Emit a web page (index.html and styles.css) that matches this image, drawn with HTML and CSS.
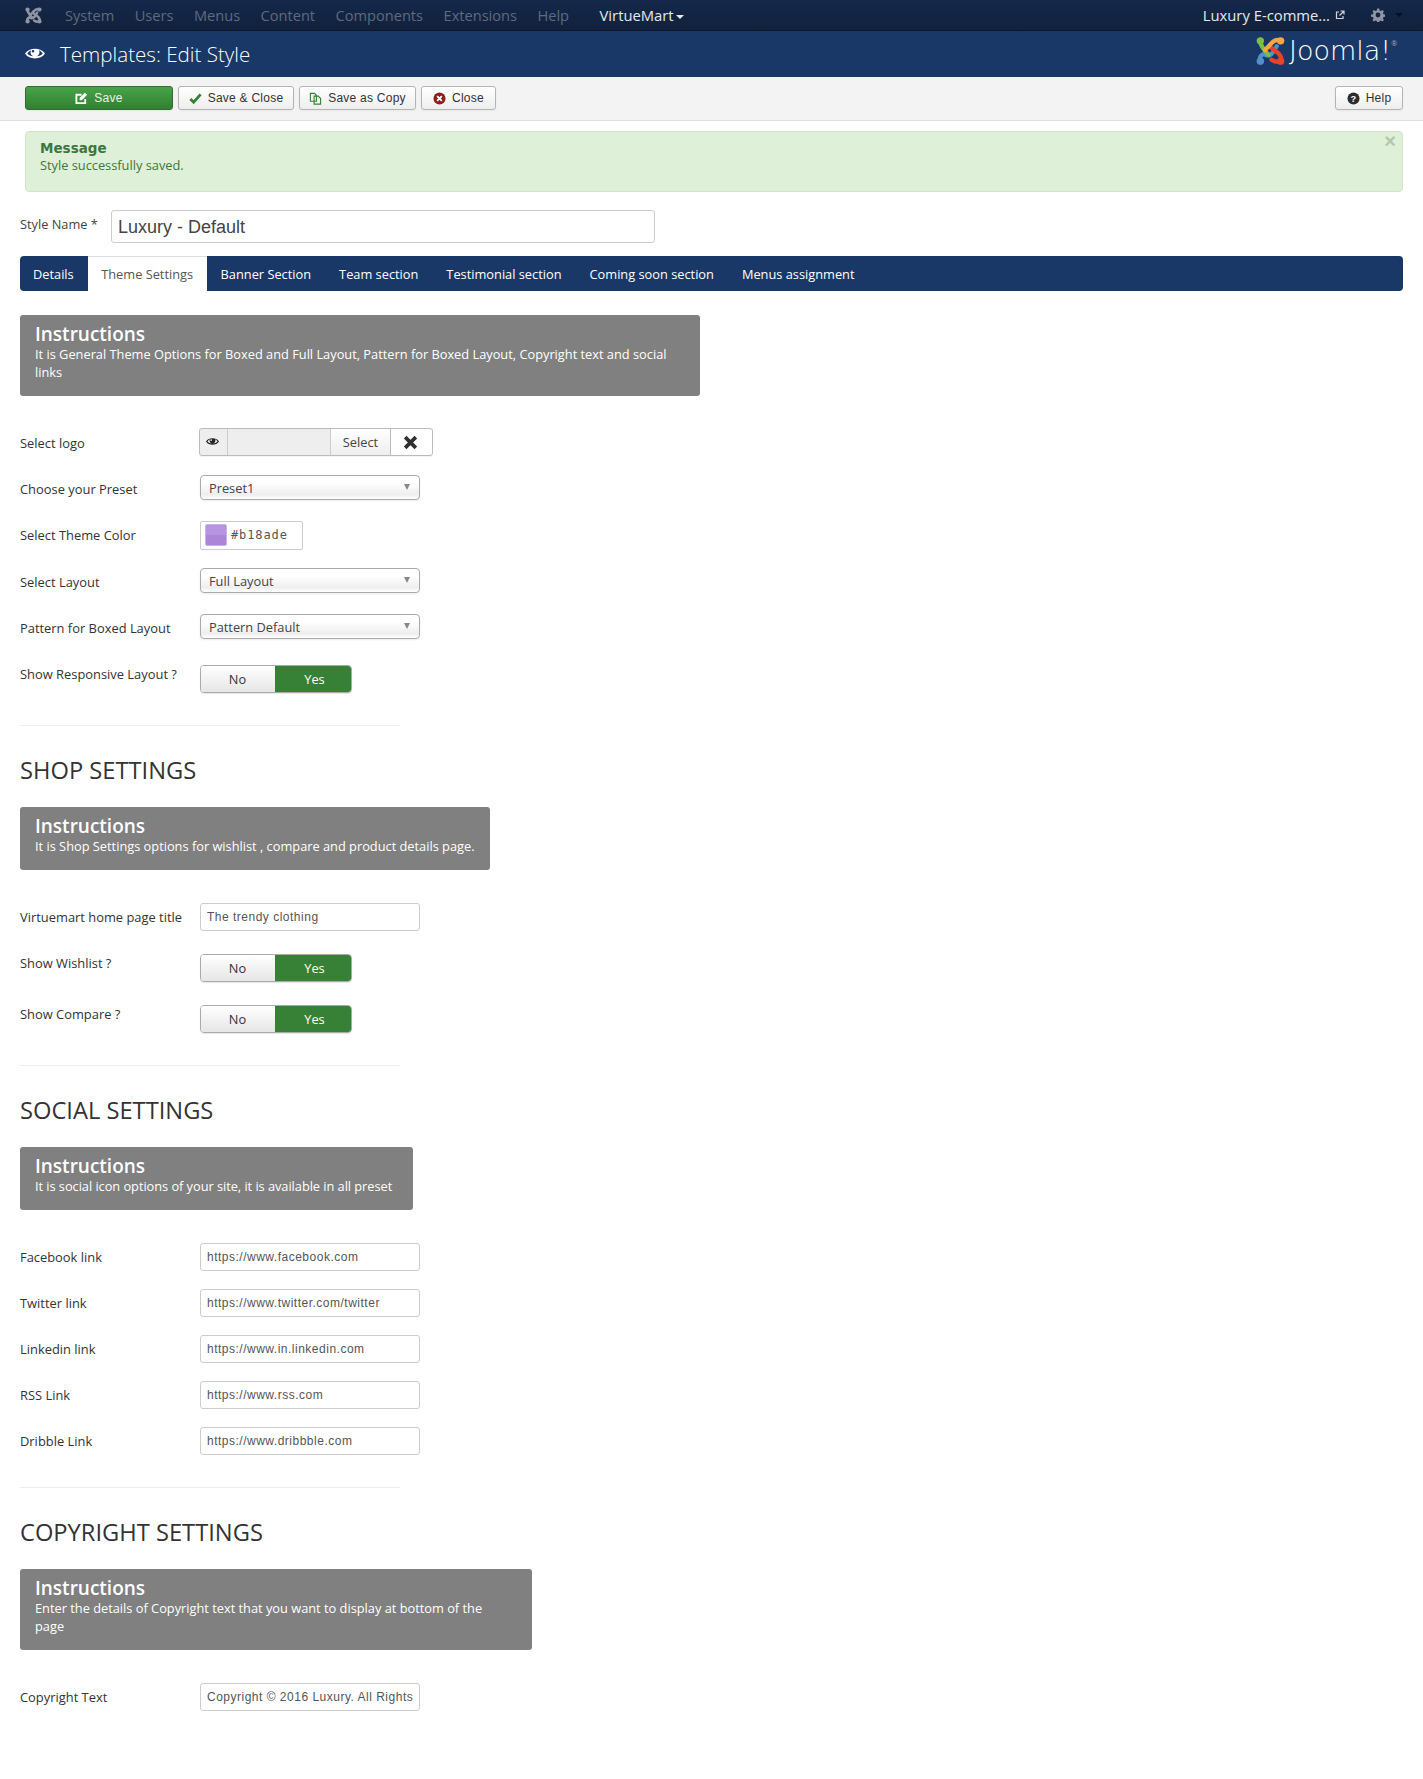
FILE: index.html
```html
<!DOCTYPE html>
<html lang="en">
<head>
<meta charset="utf-8">
<title>Templates: Edit Style</title>
<link rel="stylesheet" href="styles.css">
</head>
<body>
<svg class="defs" width="0" height="0" aria-hidden="true">
  <symbol id="mark" viewBox="0 0 30 30">
    <g fill="none" stroke-width="4.4" stroke-linecap="round" stroke-linejoin="round">
      <path class="m-b" d="M4 26 Q3 20 8 18 Q13 22 17 17 L21.500 10"/>
      <path class="m-g" d="M4 4 Q5 11 13 19"/>
      <path class="m-r" d="M15 11 L23 17 Q27 21 26 26 Q20 27 16 24"/>
      <path class="m-o" d="M26 4 Q20 2 16 7 L9.500 14"/>
    </g>
    <circle class="d-g" cx="4.500" cy="4.500" r="3.800"/>
    <circle class="d-o" cx="25.500" cy="4.500" r="3.800"/>
    <circle class="d-r" cx="25.500" cy="25.500" r="3.800"/>
    <circle class="d-b" cx="4.500" cy="25.500" r="3.800"/>
  </symbol>
  <symbol id="eye" viewBox="0 0 20 13">
    <path d="M0 6.500 C4 0 16 0 20 6.500 C16 13 4 13 0 6.500 Z M2.200 6.500 C5 10.500 15 10.500 17.800 6.500 C16.600 4.800 15.300 3.800 14 3.200 C15.500 6.500 13 9.600 10 9.600 C7 9.600 4.500 6.500 6 3.200 C4.700 3.800 3.400 4.800 2.200 6.500 Z M8 3 A1.300 1.300 0 1 0 8 5.600 A1.300 1.300 0 1 0 8 3 Z" fill-rule="evenodd"/>
  </symbol>
</svg>

<nav class="topnav">
  <svg class="nav-mark"><use href="#mark"/></svg>
  <ul class="nav-menu">
    <li>System</li><li>Users</li><li>Menus</li><li>Content</li><li>Components</li><li>Extensions</li><li>Help</li>
    <li class="active">VirtueMart<i class="caret"></i></li>
  </ul>
  <div class="nav-right">
    <span class="site-name">Luxury E-comme...</span>
    <svg class="ext" viewBox="0 0 10 10"><path d="M4 2H1.500V8.500H8V6M5.500 1H9V4.500M9 1L4.500 5.500" fill="none" stroke="#cfd3da" stroke-width="1.200"/></svg>
    <svg class="gear" viewBox="0 0 14 14"><path d="M7 0.500l1.200 0 .4 1.900 1.300.6 1.600-1 1.400 1.400-1 1.600.6 1.300 1.900.4 0 2-1.900.4-.6 1.300 1 1.600-1.400 1.400-1.600-1-1.300.6-.4 1.900-2 0-.4-1.900-1.300-.6-1.600 1-1.400-1.400 1-1.600-.6-1.300-1.900-.4 0-2 1.900-.4.6-1.300-1-1.600 1.400-1.400 1.600 1 1.300-.6.4-1.900z M7 4.600a2.400 2.400 0 1 0 0 4.800 2.400 2.400 0 1 0 0-4.800z" fill="#8d95a3" fill-rule="evenodd"/></svg>
    <i class="caret dark"></i>
  </div>
</nav>

<header class="titlebar">
  <svg class="title-eye"><use href="#eye"/></svg>
  <h1>Templates: Edit Style</h1>
  <div class="brand">
    <svg class="brand-mark"><use href="#mark"/></svg>
    <span class="brand-text">Joomla!</span><sup class="brand-reg">®</sup>
  </div>
</header>

<div class="toolbar">
  <button class="tb tb-save"><svg class="tb-i" viewBox="0 0 14 14"><path d="M11 7.500V12H1.500V3H7" fill="none" stroke="#fff" stroke-width="2"/><path d="M5 6.500L10.500.8 13 3 7.500 9H5z" fill="#fff"/></svg>Save</button>
  <button class="tb tb-sc"><svg class="tb-i" viewBox="0 0 14 14"><path d="M1.500 7.500L5 11 12.500 2.500" fill="none" stroke="#378137" stroke-width="3"/></svg>Save &amp; Close</button>
  <button class="tb tb-copy"><svg class="tb-i" viewBox="0 0 14 14"><path d="M1.500 1.500H6L8 3.500V10H1.500z M5.500 4.500H10L12.500 7V13H5.500z" fill="#f3f3f3" stroke="#378137" stroke-width="1.200"/></svg>Save as Copy</button>
  <button class="tb tb-close"><svg class="tb-i" viewBox="0 0 14 14"><circle cx="7" cy="7" r="6.500" fill="#8f1d1d"/><path d="M4.500 4.500L9.500 9.500M9.500 4.500L4.500 9.500" stroke="#fff" stroke-width="2"/></svg>Close</button>
  <button class="tb tb-help"><svg class="tb-i" viewBox="0 0 14 14"><circle cx="7" cy="7" r="6.500" fill="#2d2d2d"/><text class="q" x="7" y="10.500" text-anchor="middle">?</text></svg>Help</button>
</div>

<main class="content">
  <div class="alert">
    <span class="alert-x">×</span>
    <h4>Message</h4>
    <p>Style successfully saved.</p>
  </div>

  <div class="style-name">
    <label>Style Name *</label>
    <input class="name-input" type="text" value="Luxury - Default">
  </div>

  <ul class="tabs">
    <li>Details</li><li class="on">Theme Settings</li><li>Banner Section</li><li>Team section</li><li>Testimonial section</li><li>Coming soon section</li><li>Menus assignment</li>
  </ul>

  <section class="note w1">
    <h3>Instructions</h3>
    <p>It is General Theme Options for Boxed and Full Layout, Pattern for Boxed Layout, Copyright text and social links</p>
  </section>

  <div class="row">
    <label>Select logo</label>
    <div class="media">
      <span class="m-eye"><svg><use href="#eye"/></svg></span>
      <span class="m-field"></span>
      <span class="m-sel">Select</span>
      <span class="m-x"><svg viewBox="0 0 14 14"><path d="M2 2L12 12M12 2L2 12" stroke="#2f2f2f" stroke-width="3.400" fill="none"/></svg></span>
    </div>
  </div>
  <div class="row"><label>Choose your Preset</label><div class="sel">Preset1</div></div>
  <div class="row tall"><label>Select Theme Color</label><div class="color"><span class="sw"></span><span>#b18ade</span></div></div>
  <div class="row"><label>Select Layout</label><div class="sel">Full Layout</div></div>
  <div class="row"><label>Pattern for Boxed Layout</label><div class="sel">Pattern Default</div></div>
  <div class="row top lead"><label>Show Responsive Layout ?</label><div class="tog"><span class="no">No</span><span class="yes">Yes</span></div></div>

  <hr>
  <h2>SHOP SETTINGS</h2>
  <section class="note w2">
    <h3>Instructions</h3>
    <p>It is Shop Settings options for wishlist , compare and product details page.</p>
  </section>
  <div class="row"><label>Virtuemart home page title</label><input class="txt" type="text" value="The trendy clothing"></div>
  <div class="row top lead"><label>Show Wishlist ?</label><div class="tog"><span class="no">No</span><span class="yes">Yes</span></div></div>
  <div class="row top"><label>Show Compare ?</label><div class="tog"><span class="no">No</span><span class="yes">Yes</span></div></div>

  <hr>
  <h2>SOCIAL SETTINGS</h2>
  <section class="note w3">
    <h3>Instructions</h3>
    <p>It is social icon options of your site, it is available in all preset</p>
  </section>
  <div class="row"><label>Facebook link</label><input class="txt" type="text" value="https://www.facebook.com"></div>
  <div class="row"><label>Twitter link</label><input class="txt" type="text" value="https://www.twitter.com/twitter"></div>
  <div class="row"><label>Linkedin link</label><input class="txt" type="text" value="https://www.in.linkedin.com"></div>
  <div class="row"><label>RSS Link</label><input class="txt" type="text" value="https://www.rss.com"></div>
  <div class="row"><label>Dribble Link</label><input class="txt" type="text" value="https://www.dribbble.com"></div>

  <hr>
  <h2>COPYRIGHT SETTINGS</h2>
  <section class="note w4">
    <h3>Instructions</h3>
    <p>Enter the details of Copyright text that you want to display at bottom of the page</p>
  </section>
  <div class="row"><label>Copyright Text</label><input class="txt" type="text" value="Copyright © 2016 Luxury. All Rights Reserved"></div>
</main>
</body>
</html>
```

FILE: styles.css
```css
* { box-sizing: border-box; }
html, body { margin: 0; padding: 0; }
body { background: #fff; color: #333; font-family: "Open Sans", sans-serif; font-size: 12.8px; height: 1779px; overflow: hidden; }
.defs { position: absolute; }
h1, h2, h3, h4, p, ul { margin: 0; padding: 0; }
ul { list-style: none; }

.m-g { stroke: var(--g); }
.m-o { stroke: var(--o); }
.m-r { stroke: var(--r); }
.m-b { stroke: var(--b); }
.d-g { fill: var(--g); }
.d-o { fill: var(--o); }
.d-r { fill: var(--r); }
.d-b { fill: var(--b); }

.topnav { height: 31px; background: linear-gradient(#14284a, #12213c); border-bottom: 1px solid #0c1729; display: flex; align-items: center; padding-left: 25px; }
.nav-mark { width: 17px; height: 17px; margin-right: 23px; --g: #8d95a3; --o: #8d95a3; --r: #8d95a3; --b: #8d95a3; }
.nav-menu { display: flex; font-size: 14.6px; color: #5f6a7e; }
.nav-menu li { margin-right: 20.500px; line-height: 30px; }
.nav-menu li.active { color: #e6e8ec; margin-left: 10px; font-size: 14.800px; }
.caret { display: inline-block; border: 4px solid transparent; border-top-color: #e6e8ec; border-bottom: 0; margin-left: 2px; vertical-align: middle; }
.caret.dark { border-top-color: #07101f; margin-left: 10px; }
.nav-right { margin-left: auto; display: flex; align-items: center; padding-right: 20px; color: #e6e8ec; font-size: 14.800px; }
.ext { width: 10px; height: 10px; margin-left: 5px; margin-right: 26px; }
.gear { width: 14px; height: 14px; }

.titlebar { height: 46px; background: #1a3867; display: flex; align-items: center; padding-left: 25px; color: #fff; }
.title-eye { width: 20px; height: 13px; fill: #fff; margin: -2px 15px 0 0; }
h1 { font-size: 20.600px; font-weight: 300; line-height: 46px; height: 46px; }
.brand { margin-left: auto; display: flex; align-items: center; padding-right: 26px; height: 46px; margin-top: -7px; --g: #7ac143; --o: #f9a541; --r: #e8432a; --b: #5091cd; }
.brand-mark { width: 29px; height: 30px; margin-right: 4px; }
.brand-text { font-family: "DejaVu Sans", sans-serif; font-weight: 200; font-size: 27px; line-height: 30px; }
.brand-reg { font-size: 7px; color: #aab; margin-top: -14px; }

.toolbar { height: 44px; background: #f3f3f3; border-bottom: 1px solid #e0e0e0; display: flex; padding: 9px 20px 0 25px; gap: 5px; }
.tb { height: 24px; border: 1px solid #b4b4b4; border-radius: 3px; background: linear-gradient(#fff, #eee); font-family: "Liberation Sans", sans-serif; font-size: 12px; letter-spacing: .25px; color: #333; padding: 0; display: flex; align-items: center; justify-content: center; box-shadow: 0 1px 2px rgba(0,0,0,.05); }
.tb-i { width: 13px; height: 13px; margin-right: 6px; }
.tb-save { width: 148px; background: linear-gradient(#48a348, #327f32); border-color: #2f6f2f; color: #e9f3e9; }
.tb-sc { width: 116px; }
.tb-copy { width: 117px; }
.tb-close { width: 75px; }
.tb-help { width: 68px; margin-left: auto; }
.q { font: bold 10px "Liberation Sans", sans-serif; fill: #fff; }

.content { padding: 10px 20px 0; }
.alert { position: relative; margin: 0 0 0 5px; width: 1378px; height: 61px; background: #dff0d8; border: 1px solid #d0e5c5; border-radius: 4px; color: #3c763d; padding: 6px 14px; }
.alert h4 { font-weight: 700; line-height: 20px; font-family: "DejaVu Sans", sans-serif; font-size: 13.500px; }
.alert p { font-size: 12.800px; line-height: 15px; }
.alert-x { position: absolute; top: 0; right: 6px; font: bold 20px/18px "Liberation Sans", sans-serif; color: #b4c7ae; }

.style-name { display: flex; align-items: center; margin-top: 18px; height: 33px; }
.style-name label { width: 91px; color: #444; margin-top: -5px; }
.name-input { width: 544px; height: 33px; border: 1px solid #ccc; border-radius: 3px; padding: 1px 6px 0; font-family: "Liberation Sans", sans-serif; font-size: 18px; color: #444; }

.tabs { display: flex; margin-top: 13px; height: 35px; background: #1a3867; border-radius: 4px; color: #fff; line-height: 37px; }
.tabs li { padding: 0 14px; }
.tabs li:first-child { padding: 0 14px 0 13px; }
.tabs li.on { background: #fff; color: #555; padding: 0 13.500px; border-top: 1px solid #ddd; line-height: 35px; }

.note { background: #808080; color: #fff; border-radius: 3px; padding: 8px 15px 13px; }
.note h3 { font-size: 19px; font-weight: 600; line-height: 22px; }
.note p { line-height: 18px; }
.w1 { width: 680px; height: 81px; margin: 24px 0 33px; }
.w2 { width: 470px; height: 63px; margin-bottom: 33px; }
.w3 { width: 393px; height: 63px; margin-bottom: 33px; }
.w3 p { letter-spacing: -.04px; }
.w4 { width: 512px; height: 81px; margin-bottom: 33px; padding-right: 24px; }

.row { display: flex; align-items: center; height: 28px; margin-bottom: 18px; }
.row.tall { margin-bottom: 19px; }
.row label { width: 180px; flex: none; color: #333; font-size: 12.900px; }
.row.top { height: 28px; margin-bottom: 23px; }
.row.lead { margin-top: 23px; }
.row.top label { align-self: flex-start; line-height: 18px; }

.media { display: flex; width: 234px; height: 28px; margin-left: -1px; margin-top: -2px; border: 1px solid #bbb; border-radius: 3px; background: #eee; box-shadow: 0 1px 1px rgba(0,0,0,.05); }
.m-eye { width: 28px; border-right: 1px solid #ccc; display: flex; align-items: center; justify-content: center; padding: 0 2px 2px 0; }
.m-eye svg { width: 13px; height: 9px; fill: #222; }
.m-field { width: 102px; }
.m-sel { width: 61px; background: linear-gradient(#fff, #eee); border-left: 1px solid #ccc; border-right: 1px solid #bbb; text-align: center; line-height: 26px; color: #444; }
.m-x { flex: 1; background: #fff; display: flex; align-items: center; justify-content: center; border-radius: 0 3px 3px 0; padding-right: 3px; }
.m-x svg { width: 15px; height: 15px; }

.sel { position: relative; width: 220px; height: 25px; border: 1px solid #aaa; border-radius: 4px; background: linear-gradient(#fff 30%, #eee 80%, #fff); box-shadow: 0 1px 2px rgba(0,0,0,.08); padding-left: 8px; line-height: 24px; color: #444; margin-top: -3px; }
.sel::after { content: ""; position: absolute; right: 9px; top: 8px; border: 3.500px solid transparent; border-top: 6px solid #888; border-bottom: 0; }

.color { width: 103px; height: 29px; border: 1px solid #ccc; border-radius: 2px; display: flex; align-items: center; font-family: "DejaVu Sans Mono", monospace; font-size: 12px; color: #555; padding-left: 4px; letter-spacing: .9px; }
.sw { width: 22px; height: 22px; background: linear-gradient(#b794e0 50%, #ac85d9 50%); border-radius: 2px; margin-right: 4px; border: 1px solid #c9b3e6; }

.tog { display: flex; width: 152px; height: 28px; border: 1px solid #aaa; border-radius: 4px; overflow: hidden; line-height: 27px; text-align: center; box-shadow: 0 1px 1px rgba(0,0,0,.1); }
.tog .no { width: 75px; padding-right: 2px; background: linear-gradient(#fff, #e6e6e6); color: #333; }
.tog .yes { flex: 1; background: #378137; color: #fff; margin: -1px; padding-left: 2px; line-height: 29px; }

.txt { width: 220px; height: 28px; border: 1px solid #ccc; border-radius: 3px; padding: 0 6px; font-family: "Liberation Sans", sans-serif; font-size: 12px; letter-spacing: .5px; color: #555; }

hr { width: 380px; height: 1px; border: 0; background: #eee; margin: 32px 0 0; }
h2 { font-size: 23.700px; font-weight: 400; line-height: 30px; color: #333; margin: 29px 0 22px; }
```
